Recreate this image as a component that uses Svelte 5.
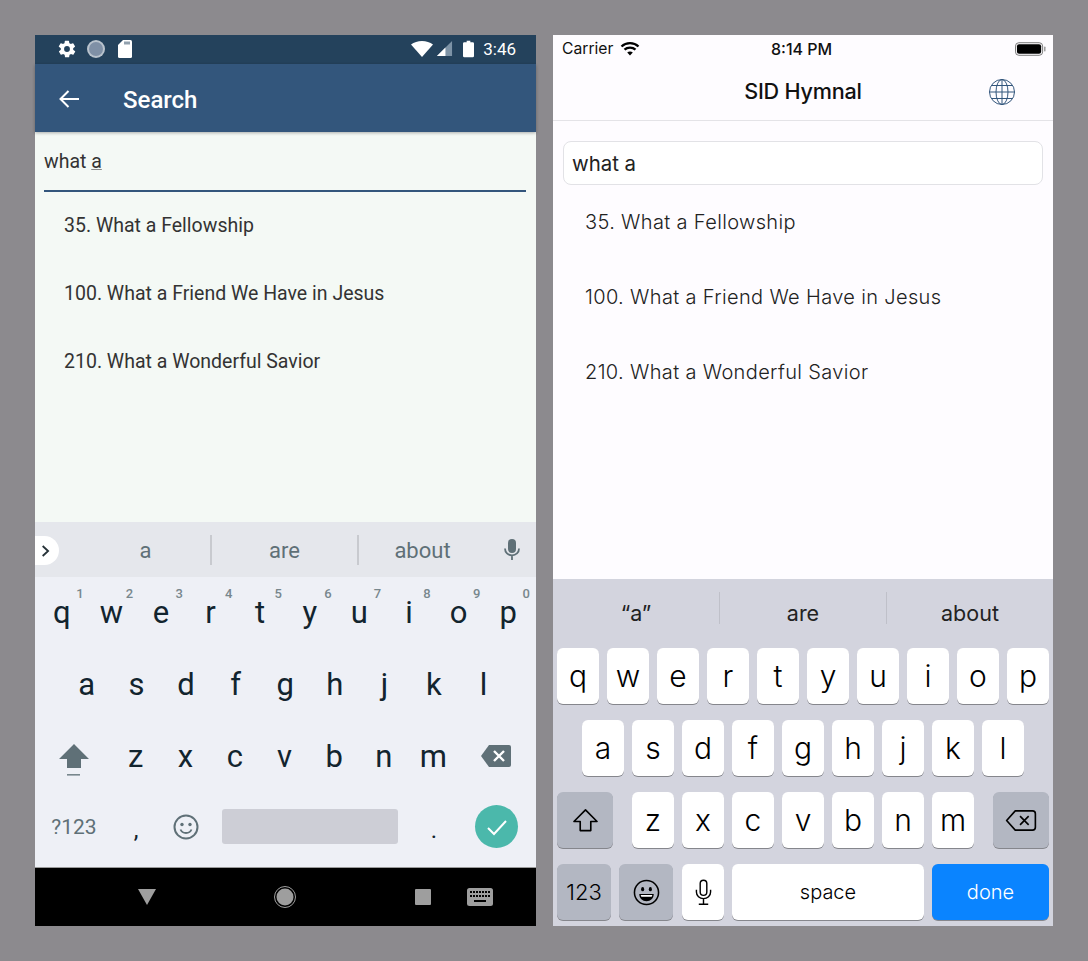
<script lang="ts">
  const androidRows = [
    ['q', 'w', 'e', 'r', 't', 'y', 'u', 'i', 'o', 'p'],
    ['a', 's', 'd', 'f', 'g', 'h', 'j', 'k', 'l'],
    ['z', 'x', 'c', 'v', 'b', 'n', 'm'],
  ];
  const digits = ['1', '2', '3', '4', '5', '6', '7', '8', '9', '0'];
  const hymnsAndroid = ['35. What a Fellowship', '100. What a Friend We Have in Jesus', '210. What a Wonderful Savior'];
</script>

<div class="page">
  <section class="droid">
    <div class="droid-status">
      <svg class="st-gear" viewBox="0 0 24 24" width="20" height="20"><path fill="#fff" d="M19.4 13a7.500 7.500 0 0 0 0-2l2.100-1.600a.5.5 0 0 0 .1-.6l-2-3.500a.5.5 0 0 0-.6-.2l-2.500 1a7.300 7.300 0 0 0-1.700-1l-.4-2.700a.5.5 0 0 0-.5-.4h-4a.5.5 0 0 0-.5.4l-.4 2.700a7.700 7.700 0 0 0-1.700 1l-2.500-1a.5.5 0 0 0-.6.2l-2 3.500a.5.5 0 0 0 .1.600L4.600 11a7.900 7.900 0 0 0 0 2l-2.100 1.600a.5.5 0 0 0-.1.600l2 3.500c.1.200.4.300.6.200l2.500-1c.5.400 1.100.7 1.700 1l.4 2.700c0 .2.200.4.500.4h4c.3 0 .5-.2.500-.4l.4-2.700a7.700 7.700 0 0 0 1.700-1l2.500 1c.2.100.5 0 .6-.2l2-3.500a.5.500 0 0 0-.1-.6zM12 15.500a3.500 3.500 0 1 1 0-7 3.500 3.500 0 0 1 0 7z"/></svg>
      <svg class="st-dot" viewBox="0 0 18 18" width="18" height="18"><circle cx="9" cy="9" r="9" fill="#b9c3cd"/><circle cx="9" cy="9" r="7" fill="#7f90a6"/></svg>
      <svg class="st-sd" viewBox="0 0 16 18" width="16" height="18"><path fill="#fff" d="M6 0h7.500A1.500 1.500 0 0 1 15 1.500v15a1.500 1.500 0 0 1-1.500 1.500h-11A1.500 1.500 0 0 1 1 16.500V5z"/><path stroke="#24425c" stroke-width="1" d="M8 1.500v3M10 1.500v3M12 1.500v3"/></svg>
      <span class="spacer"></span>
      <svg viewBox="0 0 22 16" width="22" height="16"><path fill="#fff" d="M0 3.500C3 1.300 6.800 0 11 0s8 1.300 11 3.500L11 16z"/></svg>
      <svg class="st-signal" viewBox="0 0 18 18" width="17" height="17"><path fill="#7d93a6" d="M17 1v16H1z"/><path fill="#fff" d="M10 8v9H1z"/></svg>
      <svg class="st-batt" viewBox="0 0 12 18" width="11" height="18"><path fill="#fff" d="M4 0h4v1.500h2.500A1.500 1.500 0 0 1 12 3v13.500a1.500 1.500 0 0 1-1.500 1.500h-9A1.500 1.500 0 0 1 0 16.500V3a1.500 1.500 0 0 1 1.500-1.500H4z"/></svg>
      <span class="st-time">3:46</span>
    </div>
    <header class="droid-bar">
      <svg viewBox="0 0 24 24" width="24" height="24"><path fill="none" stroke="#fff" stroke-width="2" d="M22 12H3.500M11.500 4l-8 8 8 8"/></svg>
      <h1>Search</h1>
    </header>
    <div class="droid-body">
      <div class="droid-input"><span>what <u>a</u></span></div>
      <ul class="droid-list">
        {#each hymnsAndroid as hymn}
          <li>{hymn}</li>
        {/each}
      </ul>
    </div>
    <div class="droid-suggest">
      <span class="chev">
        <svg viewBox="0 0 12 16" width="10" height="14"><path fill="none" stroke="#263238" stroke-width="2.200" d="M2 2l6.500 6L2 14"/></svg>
      </span>
      <span class="sug sug-a">a</span>
      <i></i>
      <span class="sug sug-b">are</span>
      <i></i>
      <span class="sug sug-c">about</span>
      <svg class="sug-mic" viewBox="0 0 18 24" width="18" height="24"><rect x="5" y="1" width="8" height="14" rx="4" fill="#5f7077"/><path fill="none" stroke="#5f7077" stroke-width="1.800" d="M2 10.500c0 4 3 6.800 7 6.800s7-2.800 7-6.800M9 17v5"/></svg>
    </div>
    <div class="droid-keys">
      <div class="drow drow-1">
        {#each androidRows[0] as key, i}
          <span class="dkey">{key}<sup>{digits[i]}</sup></span>
        {/each}
      </div>
      <div class="drow drow-2">
        {#each androidRows[1] as key}
          <span class="dkey">{key}</span>
        {/each}
      </div>
      <div class="drow">
        <span class="dside dshift">
          <svg viewBox="0 0 30 34" width="30" height="34"><path fill="#5f7077" d="M15 0l15 15h-8v9H8v-9H0z"/><rect x="8" y="30" width="13" height="1.600" fill="#78878d"/></svg>
        </span>
        {#each androidRows[2] as key}
          <span class="dkey">{key}</span>
        {/each}
        <span class="dside dback">
          <svg viewBox="0 0 30 22" width="30" height="22"><path fill="#5f7077" d="M8 0h20a2 2 0 0 1 2 2v18a2 2 0 0 1-2 2H8L0 11z"/><path stroke="#fff" stroke-width="2.400" d="M13 6l10 10M23 6L13 16"/></svg>
        </span>
      </div>
      <div class="drow drow-4">
        <span class="dnum">?123</span>
        <span class="dcomma">,</span>
        <span class="demoji">
          <svg viewBox="0 0 26 26" width="26" height="26"><circle cx="13" cy="13" r="11.500" fill="none" stroke="#5f7077" stroke-width="2"/><circle cx="9" cy="10.500" r="1.700" fill="#5f7077"/><circle cx="17" cy="10.500" r="1.700" fill="#5f7077"/><path fill="none" stroke="#5f7077" stroke-width="1.800" d="M7.500 15.500c1 2.500 3 3.500 5.500 3.500s4.500-1 5.500-3.500"/></svg>
        </span>
        <span class="dspace"></span>
        <span class="dperiod">.</span>
        <span class="dgo">
          <svg viewBox="0 0 24 24" width="24" height="24"><path fill="none" stroke="#fff" stroke-width="2" d="M3 13l6 6L21 6"/></svg>
        </span>
      </div>
    </div>
    <nav class="droid-nav">
      <svg class="nav-back" viewBox="0 0 18 16" width="18" height="16"><path fill="#9e9e9e" d="M0 0h18L9 16z"/></svg>
      <svg class="nav-home" viewBox="0 0 24 24" width="24" height="24"><circle cx="12" cy="12" r="10.500" fill="none" stroke="#9e9e9e" stroke-width="1"/><circle cx="12" cy="12" r="8.500" fill="#9e9e9e"/></svg>
      <span class="nav-square"></span>
      <svg class="nav-kbd" viewBox="0 0 26 18" width="26" height="18"><rect width="26" height="18" rx="2.500" fill="#9e9e9e"/><path stroke="#000" stroke-width="2" stroke-dasharray="2 1" d="M3 4h20M3 8h20"/><path stroke="#000" stroke-width="2" d="M7 13h12"/></svg>
    </nav>
  </section>

  <section class="ios">
    <div class="ios-status">
      <span class="carrier">Carrier</span>
      <svg viewBox="0 0 20 15" width="20" height="15"><path fill="none" stroke="#000" stroke-width="2.300" d="M1.500 5.500c4.700-4.400 12.300-4.400 17 0M4.500 8.700c3-2.800 8-2.800 11 0"/><path fill="#000" d="M7.200 11.500c1.600-1.300 4-1.300 5.600 0L10 14.500z"/></svg>
      <span class="ios-time">8:14 PM</span>
      <svg class="ios-batt" viewBox="0 0 32 14" width="31" height="14"><rect x=".5" y=".5" width="28" height="13" rx="3.500" fill="none" stroke="#777"/><rect x="2" y="2" width="25" height="10" rx="2.200" fill="#000"/><rect x="30" y="4.500" width="1.500" height="5" rx=".7" fill="#999"/></svg>
    </div>
    <header class="ios-bar">
      <h1>SID Hymnal</h1>
      <svg class="globe" viewBox="0 0 26 26" width="26" height="26"><g fill="none" stroke="#33567c" stroke-width="1"><circle cx="13" cy="13" r="12.500"/><ellipse cx="13" cy="13" rx="6" ry="12.500"/><path d="M13 .5v25M.5 13h25M2.500 6.500h21M2.500 19.500h21"/></g></svg>
    </header>
    <div class="ios-body">
      <div class="ios-input"><span>what a</span></div>
      <ul class="ios-list">
        {#each hymnsAndroid as hymn}
          <li>{hymn}</li>
        {/each}
      </ul>
    </div>
    <div class="ios-kb">
      <div class="ios-suggest">
        <span>“a”</span><i></i><span>are</span><i></i><span>about</span>
      </div>
      <div class="irow">
        {#each androidRows[0] as key}
          <span class="ikey">{key}</span>
        {/each}
      </div>
      <div class="irow">
        {#each androidRows[1] as key}
          <span class="ikey">{key}</span>
        {/each}
      </div>
      <div class="irow irow-3">
        <span class="ikey ifn ishift">
          <svg viewBox="0 0 28 26" width="27" height="25"><path fill="none" stroke="#000" stroke-width="1.700" stroke-linejoin="round" d="M14 2L2 14h6.500v9.500h11V14H26z"/></svg>
        </span>
        {#each androidRows[2] as key}
          <span class="ikey">{key}</span>
        {/each}
        <span class="ikey ifn ishift iback">
          <svg viewBox="0 0 32 24" width="32" height="23"><path fill="none" stroke="#000" stroke-width="1.700" stroke-linejoin="round" d="M10 2h18a3 3 0 0 1 3 3v14a3 3 0 0 1-3 3H10L1 12z"/><path stroke="#000" stroke-width="1.700" d="M15 7.500l9 9M24 7.500l-9 9"/></svg>
        </span>
      </div>
      <div class="irow irow-4">
        <span class="ikey ifn i123">123</span>
        <span class="ikey ifn iemoji">
          <svg viewBox="0 0 28 28" width="27" height="27"><circle cx="14" cy="14" r="12.500" fill="none" stroke="#000" stroke-width="1.600"/><ellipse cx="10" cy="10.500" rx="1.600" ry="2.300"/><ellipse cx="18" cy="10.500" rx="1.600" ry="2.300"/><path d="M6.500 15.500h15c0 4.500-3.300 7.500-7.500 7.500s-7.500-3-7.500-7.500z"/><path fill="#fff" d="M8 16.500h12l-.6 1.800H8.600z"/></svg>
        </span>
        <span class="ikey">
          <svg viewBox="0 0 18 28" width="17" height="27"><rect x="5.500" y="1" width="7" height="16" rx="3.500" fill="none" stroke="#000" stroke-width="1.500"/><path fill="none" stroke="#000" stroke-width="1.500" d="M1.500 11v2.500c0 4.200 3.300 7 7.500 7s7.500-2.800 7.500-7V11M9 20.500V26M4 26.500h10"/></svg>
        </span>
        <span class="ikey ispace">space</span>
        <span class="ikey idone">done</span>
      </div>
    </div>
  </section>
</div>

<style>
  :global(body) {
    margin: 0;
    background: #8c8a8e;
  }

  .page {
    display: flex;
    gap: 17px;
    width: 1088px;
    height: 961px;
    padding: 35px;
    box-sizing: border-box;
    overflow: hidden;
  }

  h1 {
    margin: 0;
  }

  ul {
    list-style: none;
    margin: 0;
    padding: 0;
  }

  /* android */
  .droid {
    width: 501px;
    height: 891px;
    display: flex;
    flex-direction: column;
    font-family: Roboto, sans-serif;
    background: #f4f9f5;
  }

  .droid-status {
    height: 29px;
    flex: none;
    display: flex;
    align-items: center;
    background: #24425c;
    padding: 0 20px 2px 22px;
    gap: 6px;
    box-sizing: border-box;
  }

  .st-dot {
    margin-left: 4px;
  }

  .st-sd {
    margin-left: 6px;
  }

  .st-signal {
    margin-left: -3px;
  }

  .st-batt {
    margin-left: 4px;
  }

  .st-time {
    color: #fff;
    font-size: 17px;
    margin-left: 3px;
  }

  .spacer {
    flex: 1;
  }

  .droid-bar {
    height: 68px;
    flex: none;
    display: flex;
    align-items: center;
    padding: 2px 0 0 22px;
    box-sizing: border-box;
    background: #33567c;
    box-shadow: 0 1px 3px rgba(0, 0, 0, 0.3);
    position: relative;
  }

  .droid-bar h1 {
    color: #fff;
    font-size: 24px;
    font-weight: 500;
    margin: 2px 0 0 42px;
  }

  .droid-body {
    flex: 1;
    padding: 0 10px 0 9px;
  }

  .droid-input {
    height: 58px;
    border-bottom: 2px solid #33567c;
    font-size: 19.500px;
    color: #333;
    display: flex;
    align-items: center;
  }

  .droid-input span {
    margin-top: 0;
  }

  .droid-input u {
    text-decoration-color: #888;
  }

  .droid-list {
    padding: 0 0 0 20px;
  }

  .droid-list li {
    height: 68px;
    line-height: 67px;
    font-size: 19.500px;
    color: #333;
  }

  .droid-suggest {
    height: 55px;
    flex: none;
    position: relative;
    display: flex;
    align-items: center;
    background: #e5e7ec;
    color: #5f7077;
    font-size: 22px;
  }

  .droid-suggest i {
    width: 2px;
    height: 30px;
    background: #c8cacf;
    flex: none;
  }

  .chev {
    position: absolute;
    left: 0;
    top: 14px;
    width: 24px;
    height: 29px;
    border-radius: 0 15px 15px 0;
    background: #fff;
    display: flex;
    align-items: center;
    justify-content: center;
    padding-right: 2px;
    box-sizing: border-box;
  }

  .sug {
    text-align: center;
    padding-top: 2px;
  }

  .sug-a {
    width: 175px;
    padding-left: 46px;
    box-sizing: border-box;
  }

  .sug-b {
    width: 145px;
  }

  .sug-c {
    width: 127px;
  }

  .sug-mic {
    position: absolute;
    right: 15px;
    top: 16px;
  }

  .droid-keys {
    height: 290px;
    flex: none;
    background: #eef0f6;
    color: #12242e;
  }

  .drow {
    height: 72px;
    display: flex;
    align-items: center;
    font-size: 31px;
  }

  .drow-1 {
    padding: 0 2px;
    height: 71px;
  }

  .drow-2 {
    padding-left: 27px;
  }

  .dkey {
    width: 49.600px;
    flex: none;
    text-align: center;
    position: relative;
  }

  .dkey sup {
    position: absolute;
    right: 3px;
    top: -7px;
    font-size: 13px;
    line-height: 1;
    font-weight: 500;
    color: #78878d;
  }

  .dside {
    display: flex;
    justify-content: center;
    flex: none;
  }

  .dshift {
    width: 76px;
    padding-left: 2px;
    box-sizing: border-box;
    margin-top: 10px;
  }

  .dback {
    width: 76px;
  }

  .drow-4 {
    height: 69px;
  }

  .dnum {
    width: 78px;
    text-align: center;
    font-size: 21px;
    color: #5f7077;
  }

  .dcomma {
    width: 46px;
    text-align: center;
    font-size: 24px;
    padding-top: 6px;
  }

  .demoji {
    width: 53px;
    display: flex;
    justify-content: center;
  }

  .dspace {
    width: 176px;
    height: 35px;
    margin-left: 10px;
    border-radius: 3px;
    background: #cdced6;
  }

  .dperiod {
    width: 72px;
    text-align: center;
    font-size: 24px;
    padding-top: 6px;
  }

  .dgo {
    width: 43px;
    height: 43px;
    margin-left: 5px;
    border-radius: 50%;
    background: #4bb8ab;
    display: flex;
    align-items: center;
    justify-content: center;
    flex: none;
  }

  .droid-nav {
    height: 59px;
    flex: none;
    background: #000;
    border-top: 1px solid #9a9a9a;
    box-sizing: border-box;
    display: flex;
    align-items: center;
  }

  .nav-back {
    margin-left: 103px;
  }

  .nav-home {
    margin-left: 117px;
  }

  .nav-square {
    width: 16px;
    height: 16px;
    border-radius: 1px;
    background: #9e9e9e;
    margin-left: 118px;
  }

  .nav-kbd {
    margin-left: 36px;
  }

  /* ios */
  .ios {
    width: 500px;
    height: 891px;
    display: flex;
    flex-direction: column;
    background: #fefcff;
    font-family: Inter, sans-serif;
  }

  .ios-status {
    height: 27px;
    flex: none;
    display: flex;
    align-items: center;
    position: relative;
    padding: 0 7px 0 9px;
    gap: 7px;
    font-size: 15.700px;
    color: #111;
  }

  .ios-time {
    position: absolute;
    left: 218px;
    font-size: 16px;
    font-weight: 500;
  }

  .ios-batt {
    margin-left: auto;
  }

  .ios-bar {
    height: 59px;
    flex: none;
    display: flex;
    align-items: center;
    justify-content: center;
    position: relative;
    border-bottom: 1px solid #e4e3e7;
    box-sizing: border-box;
  }

  .ios-bar h1 {
    font-size: 21.600px;
    font-weight: 500;
    color: #111;
    letter-spacing: -0.200px;
  }

  .globe {
    position: absolute;
    right: 38px;
    top: 17px;
  }

  .ios-body {
    flex: 1;
    padding: 20px 10px 0;
  }

  .ios-input {
    height: 44px;
    box-sizing: border-box;
    border: 1px solid #e2e2e6;
    border-radius: 8px;
    padding: 0 8px;
    background: #fff;
    display: flex;
    align-items: center;
    font-size: 20.400px;
    color: #222;
  }

  .ios-input span {
    margin-top: 0;
  }

  .ios-list {
    padding: 0 0 0 22px;
  }

  .ios-list li {
    height: 75px;
    line-height: 75px;
    font-size: 20px;
    font-weight: 300;
    color: #222;
    letter-spacing: 0.350px;
  }

  .ios-kb {
    height: 347px;
    flex: none;
    background: #d3d4de;
    box-sizing: border-box;
    padding: 13px 4px 0;
  }

  .ios-suggest {
    height: 56px;
    margin: 0 -4px;
    display: flex;
    align-items: flex-start;
    font-size: 21.500px;
    color: #222;
  }

  .ios-suggest span {
    flex: 1;
    text-align: center;
    line-height: 24px;
    padding-top: 9px;
  }

  .ios-suggest i {
    width: 1px;
    height: 32px;
    background: #bfc0c9;
    flex: none;
  }

  .irow {
    display: flex;
    justify-content: center;
    gap: 8px;
    height: 56px;
    margin-bottom: 16px;
  }

  .ikey {
    width: 42px;
    flex: none;
    border-radius: 6px;
    background: #fff;
    box-shadow: 0 1px 0 #85868c;
    display: flex;
    align-items: center;
    justify-content: center;
    font-size: 30px;
    font-weight: 300;
    color: #000;
  }

  .irow-3 .ishift {
    width: 56px;
    margin-right: 11px;
  }

  .irow-3 .iback {
    margin-right: 0;
    margin-left: 11px;
  }

  .ifn {
    background: #b3b7c2;
  }

  .i123 {
    width: 54px;
    font-size: 22px;
  }

  .iemoji {
    width: 54px;
    margin-right: 1px;
  }

  .ispace {
    width: 192px;
    font-size: 20px;
    font-weight: 300;
  }

  .idone {
    width: 117px;
    background: #0a84ff;
    color: #fff;
    font-size: 20px;
    font-weight: 300;
  }

  .irow-4 {
    margin-bottom: 0;
  }
</style>
